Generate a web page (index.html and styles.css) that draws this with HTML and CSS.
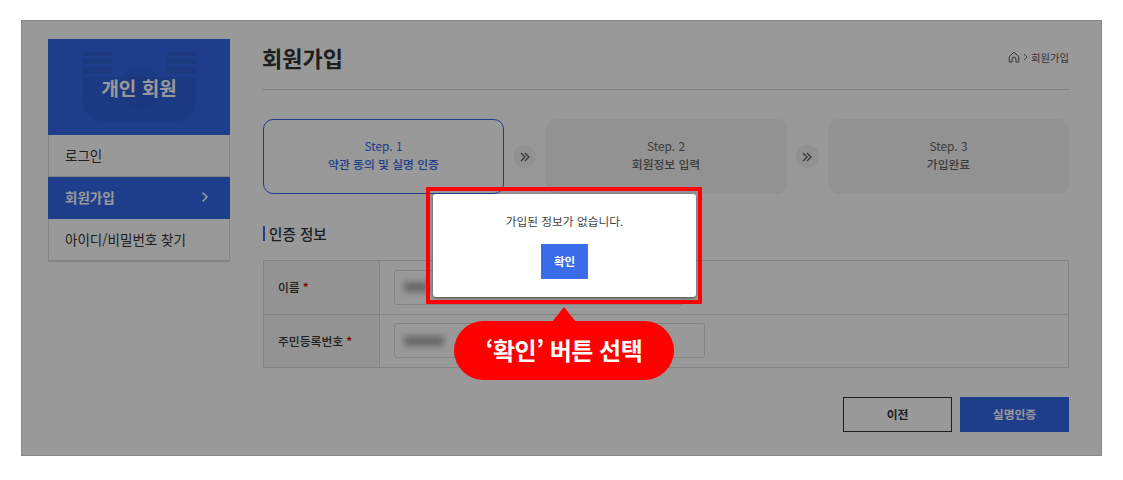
FILE: index.html
```html
<!doctype html>
<html lang="ko">
    <head>
        <meta charset="UTF-8" />
        <meta name="viewport" content="width=device-width, initial-scale=1.0" />
        <title>회원가입</title>
        <link rel="stylesheet" href="styles.css">
    </head>
    <body>
        <div class="frame">
            <aside class="side">
                <div class="side-head">
                    <svg class="side-mark" width="182" height="96" viewBox="0 0 182 96">
                        <path d="M35 13h29v4H35zM35 19h29v6H35zM35 28h29v7H35zM119 13h29v4h-29zM119 19h29v6h-29zM119 28h29v7h-29z" fill="#000" opacity="0.08" />
                        <path d="M35 38h113v23c0 13-10 22-24 22H59c-14 0-24-9-24-22z" fill="#000" opacity="0.05" />
                        <circle cx="92" cy="49" r="22" fill="#000" opacity="0.03" />
                    </svg>
                    <span class="side-title">개인 회원</span>
                </div>
                <a class="side-item">로그인</a>
                <a class="side-item active">회원가입
                    <svg width="8" height="12" viewBox="0 0 8 12"><path d="M1.5 1.5 6 6l-4.5 4.5" fill="none" stroke="#fff" stroke-width="1.6" /></svg>
                </a>
                <a class="side-item">아이디/비밀번호 찾기</a>
            </aside>

            <main class="main">
                <div class="top">
                    <h1>회원가입</h1>
                    <div class="crumb">
                        <svg width="12" height="12" viewBox="0 0 12 12"><path d="M1.2 5.6 6 1.2l4.8 4.4V11H7.9V8a1.9 1.9 0 0 0-3.8 0v3H1.2z" fill="none" stroke="#555" stroke-width="1" /></svg>
                        <svg width="5" height="8" viewBox="0 0 5 8"><path d="M1 1l3 3-3 3" fill="none" stroke="#555" stroke-width="0.9" /></svg>
                        <span>회원가입</span>
                    </div>
                </div>

                <div class="steps">
                    <div class="step current">
                        <div class="step-no">Step. 1</div>
                        <div class="step-name">약관 동의 및 실명 인증</div>
                    </div>
                    <div class="step-arrow">
                        <svg width="10" height="10" viewBox="0 0 10 10"><path d="M1 1l4 4-4 4M5 1l4 4-4 4" fill="none" stroke="#555" stroke-width="1.2" /></svg>
                    </div>
                    <div class="step">
                        <div class="step-no">Step. 2</div>
                        <div class="step-name">회원정보 입력</div>
                    </div>
                    <div class="step-arrow">
                        <svg width="10" height="10" viewBox="0 0 10 10"><path d="M1 1l4 4-4 4M5 1l4 4-4 4" fill="none" stroke="#555" stroke-width="1.2" /></svg>
                    </div>
                    <div class="step">
                        <div class="step-no">Step. 3</div>
                        <div class="step-name">가입완료</div>
                    </div>
                </div>

                <h2>인증 정보</h2>

                <div class="table">
                    <div class="row">
                        <div class="cell-label">이름 <i>*</i></div>
                        <div class="cell-field"><div class="field narrow"><span class="blur short"></span></div></div>
                    </div>
                    <div class="row">
                        <div class="cell-label">주민등록번호 <i>*</i></div>
                        <div class="cell-field"><div class="field"><span class="blur"></span></div></div>
                    </div>
                </div>

                <div class="actions">
                    <button class="btn">이전</button>
                    <button class="btn primary">실명인증</button>
                </div>
            </main>

            <div class="dim"></div>

            <div class="hilite">
                <div class="modal">
                    <p>가입된 정보가 없습니다.</p>
                    <button class="modal-btn">확인</button>
                </div>
            </div>
            <div class="callout">‘확인’ 버튼 선택</div>
        </div>
    </body>
</html>
```

FILE: styles.css
```css
* {
    box-sizing: border-box;
}

body {
    margin: 0;
    padding: 20px 21px;
    background-color: white;
    color: #333;
    font-family: "Noto Sans CJK KR", "Noto Sans", sans-serif;
}

.frame {
    position: relative;
    display: flex;
    gap: 32px;
    width: 1081px;
    height: 436px;
    padding: 18px 32px 0 26px;
    border: 1px solid #888;
    background-color: white;
}

.side {
    flex: none;
    width: 182px;
    height: 223px;
    border-bottom: 1px solid #ddd;
}

.side-head {
    position: relative;
    display: flex;
    align-items: center;
    justify-content: center;
    height: 96px;
    background-color: #3366e6;
}

.side-mark {
    position: absolute;
    left: 0;
    top: 0;
}

.side-title {
    position: relative;
    margin-top: 1px;
    color: white;
    font-size: 19px;
    font-weight: 700;
}

.side-item {
    display: flex;
    align-items: center;
    justify-content: space-between;
    height: 42px;
    padding: 0 20px 2px 16px;
    border: 1px solid #ddd;
    border-top: none;
    font-size: 13.5px;
}

.side-item.active {
    border-color: #3366e6;
    background-color: #3366e6;
    color: white;
    font-weight: 700;
}

.main {
    flex: 1;
    min-width: 0;
}

.top {
    display: flex;
    align-items: center;
    justify-content: space-between;
    height: 51px;
    border-bottom: 1px solid #ddd;
    padding-bottom: 15px;
}

h1 {
    margin: 0;
    font-size: 22px;
    font-weight: 700;
    line-height: 36px;
}

.crumb {
    display: flex;
    align-items: center;
    gap: 3px;
    margin-top: 1px;
    font-size: 10.3px;
    color: #555;
}

.steps {
    display: grid;
    grid-template-columns: 1fr 41.5px 1fr 41.5px 1fr;
    align-items: center;
    justify-items: center;
    margin-top: 29px;
    padding-left: 1px;
}

.step {
    display: flex;
    flex-direction: column;
    align-items: center;
    justify-content: center;
    width: 100%;
    height: 75px;
    padding-bottom: 4px;
    border-radius: 10px;
    background-color: #f4f4f4;
    color: #666;
    font-size: 11.8px;
}

.step.current {
    border: 1px solid #3366e6;
    background-color: white;
    color: #3366e6;
}

.step-no {
    line-height: 18px;
}

.step-name {
    font-weight: 500;
    line-height: 18px;
}

.step-arrow {
    display: flex;
    align-items: center;
    justify-content: center;
    width: 23px;
    height: 23px;
    border-radius: 50%;
    background-color: #f2f2f2;
}

h2 {
    margin: 32px 0 0 1px;
    padding-left: 4px;
    font-size: 14.6px;
    font-weight: 500;
    line-height: 15px;
    border-left: 2px solid #3366e6;
}

.table {
    margin: 19px 0 0 1px;
    border: 1px solid #ddd;
}

.row {
    display: flex;
    height: 53px;
}

.row + .row {
    border-top: 1px solid #ddd;
}

.cell-label {
    display: flex;
    align-items: center;
    gap: 3px;
    flex: none;
    width: 116px;
    padding: 0 0 2px 14px;
    border-right: 1px solid #ddd;
    background-color: #f5f5f5;
    font-size: 11.8px;
    font-weight: 500;
}

.cell-label i {
    color: #e00000;
    font-style: normal;
    font-weight: 700;
}

.cell-field {
    display: flex;
    align-items: center;
    padding: 0 0 1px 14px;
}

.field {
    display: flex;
    align-items: center;
    width: 311px;
    height: 35px;
    padding-left: 9px;
    border: 1px solid #ddd;
    border-radius: 3px;
    background-color: white;
}

.field.narrow {
    width: 290px;
}

.blur {
    width: 40px;
    height: 10px;
    background-color: #aaa;
    filter: blur(3px);
}

.blur.short {
    width: 24px;
}

.actions {
    display: flex;
    justify-content: flex-end;
    gap: 8px;
    margin-top: 29px;
}

.btn {
    width: 109px;
    height: 35px;
    padding-bottom: 3px;
    border: 1px solid #333;
    background-color: white;
    color: #333;
    font-family: inherit;
    font-size: 11.8px;
    font-weight: 700;
}

.btn.primary {
    border-color: #3366e6;
    background-color: #3366e6;
    color: white;
}

.dim {
    position: absolute;
    inset: 0;
    background-color: rgba(0, 0, 0, 0.4);
}

.hilite {
    position: absolute;
    left: 404px;
    top: 166px;
    width: 276px;
    height: 117px;
    padding: 3px 2px 3px 3px;
    border: 4px solid #ff0000;
}

.modal {
    display: flex;
    flex-direction: column;
    align-items: center;
    height: 103px;
    border-radius: 3px;
    background-color: white;
    box-shadow: 0 1px 3px rgba(0, 0, 0, 0.5);
}

.modal p {
    margin: 18px 0 0;
    font-size: 11.7px;
    line-height: 18px;
    color: #444;
}

.modal-btn {
    width: 47px;
    height: 35px;
    margin-top: 14px;
    padding-bottom: 3px;
    border: 1px solid #3a6ff0;
    background-color: #3a6be8;
    color: white;
    font-family: inherit;
    font-size: 11.5px;
    font-weight: 700;
}

.callout {
    position: absolute;
    left: 432px;
    top: 300px;
    display: flex;
    align-items: center;
    justify-content: center;
    width: 220px;
    height: 59px;
    padding-bottom: 3px;
    border-radius: 30px;
    background-color: #ff0000;
    color: white;
    font-size: 24px;
    font-weight: 700;
    letter-spacing: -0.5px;
}

.callout::before {
    content: "";
    position: absolute;
    left: 98px;
    top: -14px;
    border-left: 12px solid transparent;
    border-right: 12px solid transparent;
    border-bottom: 15px solid #ff0000;
}
```
